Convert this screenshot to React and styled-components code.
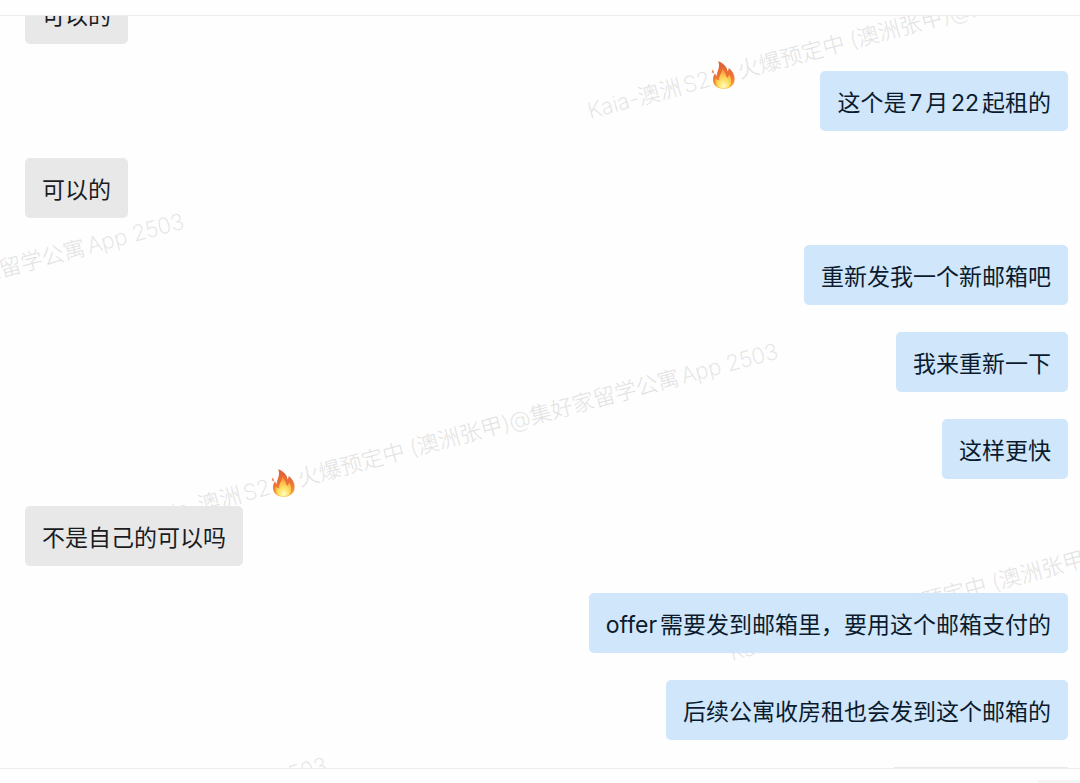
import React from "react";
import styled, { createGlobalStyle } from "styled-components";

const GlobalStyle = createGlobalStyle`
  * { box-sizing: border-box; }
  body {
    margin: 0;
    background: #fefefe;
    font-family: Inter, "Noto Sans CJK SC", sans-serif;
    text-autospace: normal;
  }
`;

const Page = styled.div`
  height: 100vh;
  display: flex;
  flex-direction: column;
  overflow: hidden;
`;

const Header = styled.header`
  flex: none;
  height: 16px;
  border-bottom: 1px solid #ececec;
`;

const Footer = styled.footer`
  flex: none;
  height: 15px;
  padding-top: 11px;
  border-top: 1px solid #ececec;
  display: flex;
  justify-content: flex-end;
`;

const FooterTab = styled.div`
  width: 42px;
  height: 3px;
  background: #f4f4f4;
`;

const Chat = styled.main`
  position: relative;
  flex: 1;
  min-height: 0;
  overflow: hidden;
  display: flex;
  flex-direction: column;
  justify-content: flex-end;
`;

const MessageList = styled.ol`
  position: relative;
  margin: 0;
  padding: 0 12px 0 25px;
  list-style: none;
  display: flex;
  flex-direction: column;
  gap: 27px;
`;

const Message = styled.li`
  flex: none;
  align-self: ${(p) => (p.$mine ? "flex-end" : "flex-start")};
  padding: 14px 17px 10px;
  border-radius: 5px;
  background: ${(p) => (p.$mine ? "#d0e6fb" : "#e8e8e8")};
  color: ${(p) => (p.$mine ? "#0b1b2d" : "#1a1c1f")};
  font-size: 23px;
  line-height: 36px;
`;

const NextMessage = styled.li`
  align-self: flex-end;
  width: 174px;
  height: 1px;
  background: #e9e9e9;
`;

const Watermark = styled.div`
  position: absolute;
  left: ${(p) => p.$x}px;
  top: ${(p) => p.$y}px;
  height: 30px;
  display: flex;
  align-items: center;
  white-space: pre;
  font-size: 22px;
  font-weight: 200;
  line-height: 30px;
  color: #e2e2e2;
  transform: rotate(-15deg);
  transform-origin: 0 50%;
`;

const Flame = styled.svg`
  flex: none;
  width: 24px;
  height: 30px;
  margin: 0 3px 0 2px;
  transform: rotate(10deg);
`;

const Fire = ({ id }) => (
  <Flame viewBox="0 0 24 30" aria-hidden="true">
    <defs>
      <linearGradient id={`${id}-outer`} x1="0" y1="0" x2="0" y2="1">
        <stop offset="0" stopColor="#dc6038" />
        <stop offset="0.5" stopColor="#ec6f35" />
        <stop offset="0.8" stopColor="#f58f30" />
        <stop offset="1" stopColor="#f9be48" />
      </linearGradient>
      <radialGradient id={`${id}-inner`} cx="0.5" cy="0.88" r="0.85">
        <stop offset="0" stopColor="#fffbc8" />
        <stop offset="0.35" stopColor="#ffe468" />
        <stop offset="0.7" stopColor="#fbb848" />
        <stop offset="1" stopColor="#f0863a" />
      </radialGradient>
    </defs>
    <path
      fill={`url(#${id}-outer)`}
      d="M8.200 1C13.500 3.500 16.500 7.500 16.600 12C17.500 11.200 18 10 18.100 8.600C21.500 12 23.200 15.600 23 19.600C22.800 25.500 18.400 29 12.400 29C6 29 1.400 25.400 1.300 19.800C1.200 16.800 2.600 14.600 4 12.700C4.300 14 4.800 15 5.600 15.500C5.700 10.800 10.200 7.500 8.200 1Z"
    />
    <path fill="#ea7a50" d="M1.800 9C3 10 3.200 11.400 2.400 12.900C1 12 .8 10.500 1.800 9Z" />
    <path
      fill={`url(#${id}-inner)`}
      d="M11.200 8.500C14.800 12 14.200 16.300 15.600 18.600C17 17.700 17.600 16.500 17.800 15C21.400 21.500 19.200 28.600 12.300 28.600C5.500 28.600 2.800 24.500 4 17.800C5 19.400 6.200 20 7.500 20.200C7.300 15.500 11.300 13.500 11.200 8.500Z"
    />
  </Flame>
);

const marks = [
  { id: "mark-a", x: 588, y: 80 },
  { id: "mark-b", x: -446, y: 358 },
  { id: "mark-c", x: 148, y: 488 },
  { id: "mark-d", x: 730, y: 622 },
  { id: "mark-e", x: -303, y: 902 },
];

const messages = [
  { text: "可以的" },
  { text: "这个是7月22起租的", mine: true },
  { text: "可以的" },
  { text: "重新发我一个新邮箱吧", mine: true },
  { text: "我来重新一下", mine: true },
  { text: "这样更快", mine: true },
  { text: "不是自己的可以吗" },
  { text: "offer需要发到邮箱里，要用这个邮箱支付的", mine: true },
  { text: "后续公寓收房租也会发到这个邮箱的", mine: true },
];

export default function App() {
  return (
    <Page>
      <GlobalStyle />
      <Header />
      <Chat>
        {marks.map((m) => (
          <Watermark key={m.id} $x={m.x} $y={m.y}>
            <span>Kaia-澳洲S2</span>
            <Fire id={m.id} />
            <span>火爆预定中 (澳洲张甲)@集好家留学公寓App 2503</span>
          </Watermark>
        ))}
        <MessageList>
          {messages.map((m, i) => (
            <Message key={i} $mine={m.mine}>
              {m.text}
            </Message>
          ))}
          <NextMessage aria-hidden="true" />
        </MessageList>
      </Chat>
      <Footer>
        <FooterTab />
      </Footer>
    </Page>
  );
}
